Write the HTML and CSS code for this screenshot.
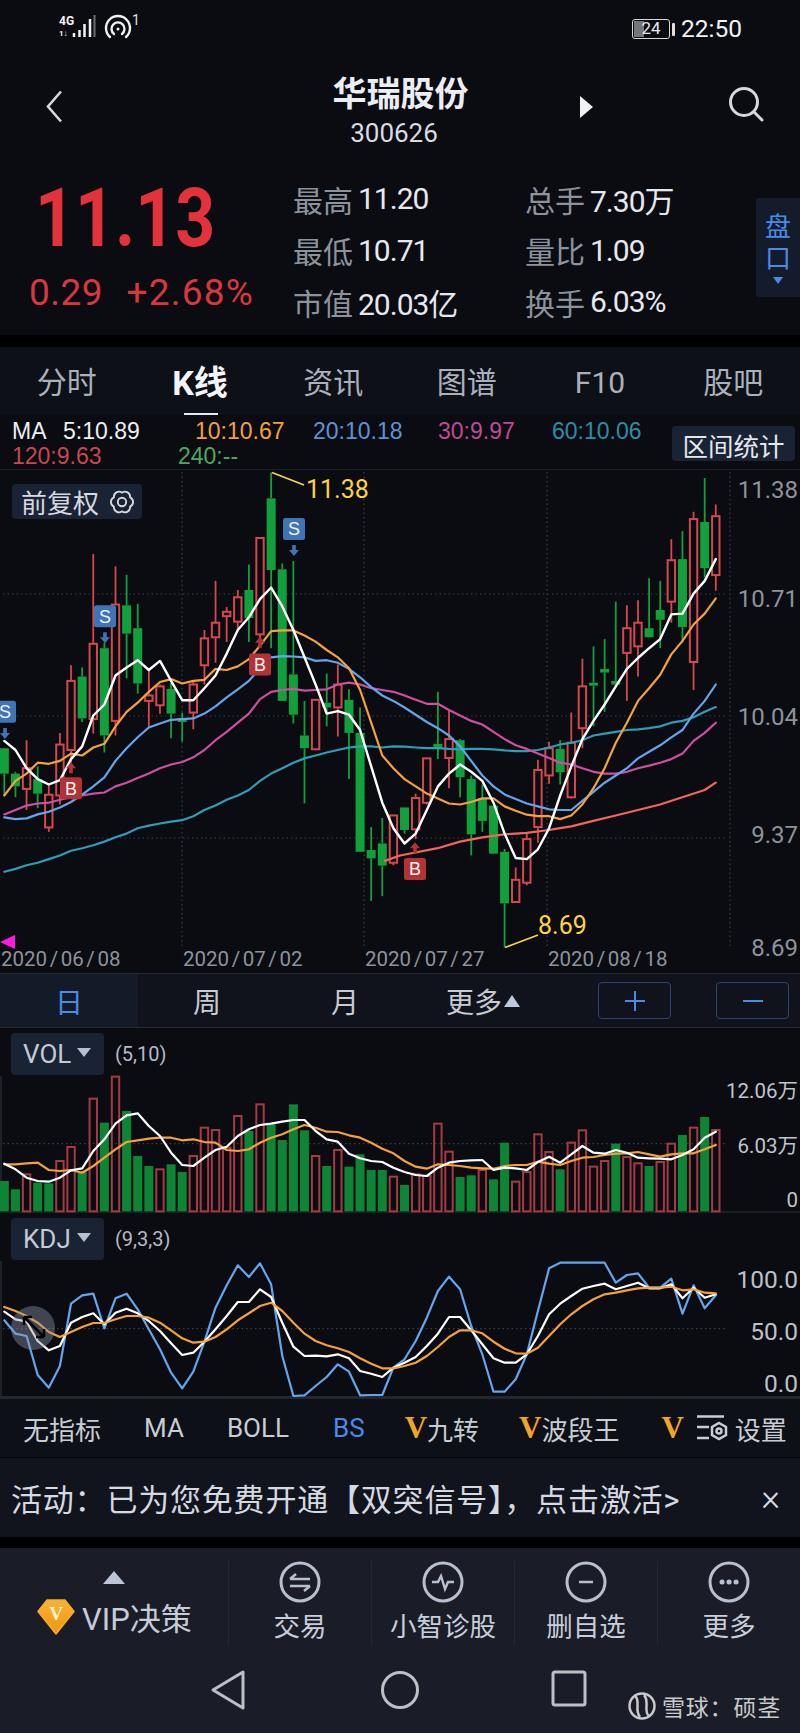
FILE: index.html
```html
<!DOCTYPE html>
<html lang="zh-CN">
<head>
    <meta charset="UTF-8">
    <meta name="viewport" content="width=device-width, initial-scale=1.0">
    <title>华瑞股份 300626</title>
    <link rel="stylesheet" href="styles.css">
</head>
<body>
    <!-- Header -->
    <header class="header">
        <div class="status-bar">
            <svg class="status-net" viewBox="0 0 100 30" width="100" height="30">
                <text class="net-text" x="2" y="10">4G</text>
                <text class="net-small" x="2" y="21">1↓</text>
                <path class="net-bars" d="M17 22v-4M22.500 22v-7M27.500 22v-13M33 22v-18"/>
                <path class="net-empty" d="M37.500 22v-22"/>
                <path class="net-arc" d="M53 22a12 12 0 1 1 16 0M57 19a6.500 6.500 0 1 1 8 0"/>
                <circle class="net-dot" cx="61" cy="14" r="1.500"/>
                <text class="net-one" x="75" y="10">1</text>
            </svg>
            <div class="status-right">
                <div class="battery"><span class="battery-fill"></span><span class="battery-num">24</span></div>
                <span class="battery-nub"></span>
                <span class="clock">22:50</span>
            </div>
        </div>

        <div class="title-bar">
            <svg class="back-icon" viewBox="0 0 17 33" width="17" height="33"><path d="M15 1.500L2 16.500L15 31.500"/></svg>
            <div class="stock-name">
                <h1>华瑞股份</h1>
                <p>300626</p>
            </div>
            <div class="title-actions">
                <span class="next-icon"></span>
                <svg class="search-icon" viewBox="0 0 36 36" width="36" height="36"><circle cx="16" cy="15" r="13.500"/><path d="M26 25l8 8"/></svg>
            </div>
        </div>

        <div class="quote">
            <div class="price-box">
                <div class="price">11.13</div>
                <div class="change"><span>0.29</span><span class="change-pct">+2.68%</span></div>
            </div>
            <div class="stats">
                <div class="stat"><span class="stat-label">最高</span><span class="stat-value">11.20</span></div>
                <div class="stat"><span class="stat-label">总手</span><span class="stat-value">7.30万</span></div>
                <div class="stat"><span class="stat-label">最低</span><span class="stat-value">10.71</span></div>
                <div class="stat"><span class="stat-label">量比</span><span class="stat-value">1.09</span></div>
                <div class="stat"><span class="stat-label">市值</span><span class="stat-value">20.03亿</span></div>
                <div class="stat"><span class="stat-label">换手</span><span class="stat-value">6.03%</span></div>
            </div>
            <div class="side-tab">
                <span>盘</span>
                <span>口</span>
                <i class="side-arrow"></i>
            </div>
        </div>
    </header>

    <!-- Tabs -->
    <nav class="tabs">
        <a>分时</a>
        <a class="tab-active">K线</a>
        <a>资讯</a>
        <a>图谱</a>
        <a>F10</a>
        <a>股吧</a>
    </nav>

    <!-- MA legend -->
    <div class="legend">
        <div class="legend-row legend-top">
            <span class="ma-white">MA</span>
            <span class="ma-white">5:10.89</span>
            <span class="ma-orange">10:10.67</span>
            <span class="ma-blue">20:10.18</span>
            <span class="ma-pink">30:9.97</span>
            <span class="ma-teal">60:10.06</span>
        </div>
        <div class="legend-row legend-bottom">
            <span class="ma-red">120:9.63</span>
            <span class="ma-green">240:--</span>
        </div>
        <button class="range-btn">区间统计</button>
    </div>

    <!-- K line chart -->
    <section class="pane pane-kline">
        <svg id="klineChart" class="pane-chart" viewBox="0 0 800 503"></svg>
        <div class="adjust-pill">
            <span>前复权</span>
            <svg class="gear-icon" viewBox="-15 -15 30 30" width="28" height="28">
                <path d="M8.660 5A5.500 5.500 0 0 1 0 10A5.500 5.500 0 0 1 -8.660 5A5.500 5.500 0 0 1 -8.660 -5A5.500 5.500 0 0 1 0 -10A5.500 5.500 0 0 1 8.660 -5A5.500 5.500 0 0 1 8.660 5Z"/>
                <circle r="4.500"/>
            </svg>
        </div>
        <span class="note note-high">11.38</span>
        <span class="note note-low">8.69</span>
        <span class="axis axis-kline" style="top:6px">11.38</span>
        <span class="axis axis-kline" style="top:115px">10.71</span>
        <span class="axis axis-kline" style="top:233px">10.04</span>
        <span class="axis axis-kline" style="top:351px">9.37</span>
        <span class="axis axis-kline" style="top:464px">8.69</span>
        <span class="date" style="left:1px">2020 / 06 / 08</span>
        <span class="date" style="left:183px">2020 / 07 / 02</span>
        <span class="date" style="left:365px">2020 / 07 / 27</span>
        <span class="date" style="left:548px">2020 / 08 / 18</span>
        <span class="start-mark"></span>
    </section>

    <!-- Period bar -->
    <div class="periods">
        <a class="period period-active">日</a>
        <a class="period">周</a>
        <a class="period">月</a>
        <a class="period">更多<i class="more-arrow"></i></a>
        <button class="zoom-btn zoom-plus"><svg viewBox="0 0 20 20" width="20" height="20"><path d="M0 10H20M10 0V20"/></svg></button>
        <button class="zoom-btn zoom-minus"><svg viewBox="0 0 20 20" width="20" height="20"><path d="M0 10H20"/></svg></button>
    </div>

    <!-- Volume -->
    <section class="pane pane-vol">
        <svg id="volChart" class="pane-chart" viewBox="0 0 800 185"></svg>
        <div class="indicator-head">
            <div class="indicator-pill">VOL<i class="pill-arrow"></i></div>
            <span class="indicator-args">(5,10)</span>
        </div>
        <span class="axis axis-vol" style="top:49px">12.06万</span>
        <span class="axis axis-vol" style="top:104px">6.03万</span>
        <span class="axis axis-vol" style="top:158px">0</span>
    </section>

    <!-- KDJ -->
    <section class="pane pane-kdj">
        <svg id="kdjChart" class="pane-chart" viewBox="0 0 800 185"></svg>
        <div class="indicator-head">
            <div class="indicator-pill">KDJ<i class="pill-arrow"></i></div>
            <span class="indicator-args">(9,3,3)</span>
        </div>
        <span class="axis axis-kdj" style="top:53px">100.0</span>
        <span class="axis axis-kdj" style="top:105px">50.0</span>
        <span class="axis axis-kdj" style="top:157px">0.0</span>
        <div class="cursor-ball">
            <svg viewBox="0 0 44 44" width="44" height="44"><path d="M13 11L33 31M13 11h8M13 11v8M33 31h-8M33 31v-8"/></svg>
        </div>
    </section>

    <!-- Indicator switch -->
    <div class="switcher">
        <a class="sw-first">无指标</a>
        <a class="sw-ma">MA</a>
        <a class="sw-boll">BOLL</a>
        <a class="sw-bs">BS</a>
        <a class="sw-nine"><b>V</b>九转</a>
        <a class="sw-wave"><b>V</b>波段王</a>
        <a class="sw-v"><b>V</b></a>
        <a class="sw-set">
            <svg class="set-icon" viewBox="0 0 32 27" width="32" height="27">
                <path d="M1 1.500H28M1 12H13M1 23H13"/>
                <path d="M23 8L30 12V20L23 24L16 20V12Z"/>
                <circle cx="23" cy="16" r="2.500"/>
            </svg>
            设置
        </a>
    </div>

    <!-- Activity banner -->
    <div class="banner">
        <span class="banner-text">活动&#xFF1A;已为您免费开通【双突信号】&#xFF0C;点击激活&gt;</span>
        <span class="banner-close">×</span>
    </div>

    <!-- Bottom toolbar -->
    <footer class="footer">
        <div class="toolbar">
            <div class="vip">
                <i class="vip-arrow"></i>
                <div class="vip-row">
                    <svg class="vip-gem" viewBox="0 0 38 36" width="38" height="36">
                        <defs>
                            <linearGradient id="gemFill" x1="0" y1="0" x2="0" y2="1">
                                <stop offset="0" stop-color="#f9b233"/>
                                <stop offset="1" stop-color="#ef9413"/>
                            </linearGradient>
                        </defs>
                        <path d="M10 1H28L37 12.500L19 35L1 12.500Z"/>
                        <text x="19" y="21">V</text>
                    </svg>
                    <span>VIP决策</span>
                </div>
            </div>
            <div class="tool">
                <svg viewBox="-21 -21 42 42" width="42" height="42"><circle r="19"/><path d="M-10 -3H10M-10 -3L-4 -8M-10 4H10M10 4L4 9"/></svg>
                <span>交易</span>
            </div>
            <div class="tool">
                <svg viewBox="-21 -21 42 42" width="42" height="42"><circle r="19"/><path d="M-11 0H-5L-2 -6L2 7L5 0H11"/></svg>
                <span>小智诊股</span>
            </div>
            <div class="tool">
                <svg viewBox="-21 -21 42 42" width="42" height="42"><circle r="19"/><path d="M-7 0H7"/></svg>
                <span>删自选</span>
            </div>
            <div class="tool">
                <svg viewBox="-21 -21 42 42" width="42" height="42"><circle r="19"/><path class="tool-dots" d="M-7 0h.1M0 0h.1M7 0h.1"/></svg>
                <span>更多</span>
            </div>
        </div>
        <div class="nav-keys">
            <svg viewBox="0 0 34 40" width="34" height="40"><path d="M2 20L32 2V38Z"/></svg>
            <svg viewBox="0 0 40 40" width="40" height="40"><circle cx="20" cy="20" r="17.500"/></svg>
            <svg class="nav-square" viewBox="0 0 36 38" width="36" height="38"><rect x="2" y="2" width="32" height="33" rx="2"/></svg>
        </div>
        <div class="watermark">
            <svg viewBox="0 0 30 30" width="30" height="30">
                <circle cx="15" cy="15" r="12.500"/>
                <path d="M8 5C14 9 7 20 13 26M22 25C16 21 23 10 17 4"/>
            </svg>
            <span>雪球&#xFF1A;硕茎</span>
        </div>
    </footer>

    <script src="chart.js"></script>
</body>
</html>
```

FILE: styles.css
```css
:root {
    --bg: #0a0c12;
    --panel: #0d1017;
    --pill: #1a2333;
    --bar: #1a1d27;
    --text: #e6e8ee;
    --muted: #8d939d;
    --soft: #b9bec9;
    --red: #e2333c;
    --blue: #4a8be8;
    --cjk: "Roboto", "Noto Sans CJK SC", sans-serif;
}

* {
    box-sizing: border-box;
}

body {
    margin: 0;
    width: 800px;
    height: 1733px;
    overflow: hidden;
    background-color: #000;
    color: var(--text);
    font-family: var(--cjk);
}

h1, p {
    margin: 0;
}

i {
    display: block;
}

/* Header */
.header {
    height: 335px;
    background-color: var(--bg);
}

.status-bar {
    height: 56px;
    padding: 15px 58px 0 57px;
    display: flex;
    justify-content: space-between;
    align-items: flex-start;
}

.status-net {
    overflow: visible;
}

.net-text {
    font: bold 12px "Roboto", sans-serif;
    fill: #f2f2f2;
}

.net-small {
    font: bold 8px "Roboto", sans-serif;
    fill: #f2f2f2;
}

.net-bars, .net-empty {
    fill: none;
    stroke: #f2f2f2;
    stroke-width: 2.500;
}

.net-empty {
    stroke: #6b6e74;
    stroke-width: 2;
}

.net-arc {
    fill: none;
    stroke: #f2f2f2;
    stroke-width: 2.400;
    stroke-linecap: round;
}

.net-dot {
    fill: #f2f2f2;
}

.net-one {
    font: 14px "Roboto", sans-serif;
    fill: #e0e0e0;
}

.status-right {
    display: flex;
    align-items: center;
    margin-top: 2px;
}

.battery {
    position: relative;
    width: 38px;
    height: 20px;
    border: 1.500px solid #d8d8d8;
    border-radius: 3px;
    text-align: center;
    font-size: 17px;
    line-height: 17px;
}

.battery-fill {
    position: absolute;
    left: 1px;
    top: 1px;
    bottom: 1px;
    width: 10px;
    background-color: #74767a;
}

.battery-num {
    position: relative;
}

.battery-nub {
    width: 3px;
    height: 13px;
    margin-left: 2px;
    background-color: #e0e0e0;
    border-radius: 1px;
}

.clock {
    margin-left: 6px;
    font-size: 24.500px;
    line-height: 24px;
    color: #f2f2f2;
}

.title-bar {
    height: 104px;
    padding: 0 46px;
    display: grid;
    grid-template-columns: 1fr 135px 1fr;
    align-items: start;
}

.back-icon {
    margin-top: 34px;
}

.back-icon path {
    fill: none;
    stroke: #d5d8e0;
    stroke-width: 2.600;
}

.stock-name {
    margin-top: 16px;
    text-align: center;
    white-space: nowrap;
}

.stock-name h1 {
    font-size: 34px;
    line-height: 44px;
    font-weight: bold;
    color: #eceef4;
}

.stock-name p {
    font-size: 26px;
    line-height: 28px;
    margin: 3px 12px 0 0;
    color: #d8dbe2;
}

.title-actions {
    display: flex;
    justify-content: space-between;
    padding-left: 112px;
    margin: 31px -10px 0 0;
}

.next-icon {
    width: 0;
    height: 0;
    margin-top: 9px;
    border-left: 13px solid #f0f1f5;
    border-top: 11px solid transparent;
    border-bottom: 11px solid transparent;
}

.search-icon path, .search-icon circle {
    fill: none;
    stroke: #d5d8e0;
    stroke-width: 3;
    stroke-linecap: round;
}

.quote {
    height: 175px;
    display: flex;
    align-items: flex-start;
}

.price-box {
    width: 293px;
    padding: 13px 0 0 29px;
    color: var(--red);
}

/* the app's digit font is narrower than Roboto */
.price {
    margin-left: 6px;
    font-size: 82px;
    line-height: 90px;
    font-weight: 700;
    transform: scaleX(0.85);
    transform-origin: left center;
}

.change {
    margin-top: 8px;
    width: 225px;
    display: flex;
    justify-content: space-between;
    font-size: 37px;
    line-height: 44px;
    letter-spacing: 0.500px;
    color: #d9363e;
}

.change-pct {
    letter-spacing: 1.200px;
}

.stats {
    width: 463px;
    margin-top: 13px;
    display: grid;
    grid-template-columns: 232px 231px;
    grid-auto-rows: 51.500px;
}

.stat {
    display: flex;
    align-items: center;
    white-space: nowrap;
}

.stat-label {
    font-size: 30px;
    width: 65px;
    color: var(--muted);
}

.stat-value {
    font-size: 30px;
    letter-spacing: -1px;
    color: var(--text);
}

.side-tab {
    width: 44px;
    height: 99px;
    margin-top: 38px;
    padding-top: 13px;
    background-color: #141c2c;
    color: var(--blue);
    font-size: 26px;
    line-height: 32px;
    text-align: center;
    display: flex;
    flex-direction: column;
    align-items: center;
    border-radius: 3px 0 0 3px;
}

.side-arrow {
    margin-top: 2px;
    border-top: 7px solid var(--blue);
    border-left: 5px solid transparent;
    border-right: 5px solid transparent;
}

/* Tabs */
.tabs {
    height: 68px;
    margin-top: 12px;
    background-color: var(--panel);
    display: grid;
    grid-template-columns: repeat(6, 1fr);
    text-align: center;
    font-size: 30px;
    line-height: 72px;
    color: #aab1bd;
}

.tabs a {
    position: relative;
}

.tab-active {
    color: #f2f4fa;
    font-size: 34px;
    font-weight: bold;
}

.tab-active::after {
    content: "";
    position: absolute;
    left: 51px;
    bottom: 0;
    width: 34px;
    height: 6px;
    background-color: #e6e8f5;
}

/* Legend */
.legend {
    position: relative;
    height: 55px;
    padding: 4px 0 0 12px;
    background-color: var(--bg);
    border-bottom: 1px solid #1b1e26;
    font-family: "Liberation Sans", sans-serif;
    font-size: 23px;
    line-height: 25px;
}

.legend-row {
    display: grid;
    white-space: nowrap;
}

.legend-top {
    grid-template-columns: 51px 132px 118px 125px 114px auto;
}

.legend-bottom {
    grid-template-columns: 166px auto;
}

.ma-white { color: #eceef0; }
.ma-orange { color: #f2a03d; }
.ma-blue { color: #5b94d6; }
.ma-pink { color: #bf4a94; }
.ma-teal { color: #2e8ca8; }
.ma-red { color: #c9474d; }
.ma-green { color: #4aa862; }

.range-btn {
    position: absolute;
    right: 5px;
    top: 11px;
    width: 123px;
    height: 35px;
    padding: 0;
    border: none;
    border-radius: 4px;
    background-color: var(--pill);
    color: #e6e8ee;
    font-family: var(--cjk);
    font-size: 25.500px;
    white-space: nowrap;
}

/* Chart panes */
.pane {
    position: relative;
    background-color: var(--bg);
}

.pane-chart {
    display: block;
    width: 800px;
    height: 100%;
}

.pane-kline {
    height: 503px;
}

.pane-vol, .pane-kdj {
    height: 185px;
}

.adjust-pill {
    position: absolute;
    left: 12px;
    top: 14px;
    width: 130px;
    height: 35px;
    padding-left: 9px;
    display: flex;
    align-items: center;
    gap: 9px;
    background-color: var(--pill);
    border-radius: 4px;
    font-size: 26px;
    white-space: nowrap;
    color: #d5d9e2;
}

.gear-icon path, .gear-icon circle {
    fill: none;
    stroke: #d5d9e2;
    stroke-width: 2;
    stroke-linejoin: round;
}

.note {
    position: absolute;
    font-size: 25px;
    line-height: 28px;
    color: #ffd23f;
}

.note-high {
    left: 306px;
    top: 6px;
}

.note-low {
    left: 538px;
    top: 442px;
}

.axis {
    position: absolute;
    right: 2px;
    line-height: 28px;
    white-space: nowrap;
}

.axis-kline {
    font-size: 24px;
    color: var(--muted);
}

.axis-vol {
    font-size: 20.500px;
    color: #c0c4cc;
}

.axis-kdj {
    font-size: 24.500px;
    color: #bcc0c9;
}

.date {
    position: absolute;
    top: 476px;
    font-size: 20.500px;
    line-height: 26px;
    word-spacing: -2.500px;
    color: var(--muted);
}

.start-mark {
    position: absolute;
    left: 0;
    top: 465px;
    border-right: 15px solid #ff19e8;
    border-top: 7px solid transparent;
    border-bottom: 7px solid transparent;
}

/* Period bar */
.periods {
    height: 55px;
    padding-right: 11px;
    display: flex;
    align-items: center;
    background-color: #10131b;
    border-top: 1px solid #262a34;
    border-bottom: 1px solid #262a34;
    font-size: 28px;
    color: #c7cbd3;
}

.period {
    width: 138px;
    height: 100%;
    display: flex;
    justify-content: center;
    align-items: center;
}

.period-active {
    background-color: #131a28;
    color: var(--blue);
}

.more-arrow {
    margin-left: 2px;
    border-bottom: 12px solid #bec8de;
    border-left: 8px solid transparent;
    border-right: 8px solid transparent;
}

.zoom-btn {
    width: 73px;
    height: 37px;
    padding: 0;
    display: flex;
    justify-content: center;
    align-items: center;
    background-color: transparent;
    border: 1.500px solid #2d4470;
    border-radius: 4px;
}

.zoom-btn path {
    fill: none;
    stroke: var(--blue);
    stroke-width: 2;
}

.zoom-plus {
    margin-left: 46px;
}

.zoom-minus {
    margin-left: 45px;
}

.indicator-head {
    position: absolute;
    left: 11px;
    top: 5px;
    display: flex;
    align-items: center;
    gap: 11px;
}

.indicator-pill {
    width: 93px;
    height: 42px;
    padding-left: 12px;
    display: flex;
    align-items: center;
    gap: 6px;
    background-color: var(--pill);
    border-radius: 4px;
    font-size: 26px;
    color: #c4cad6;
}

.pill-arrow {
    margin-top: -4px;
    border-top: 9px solid #b8bfce;
    border-left: 7px solid transparent;
    border-right: 7px solid transparent;
}

.indicator-args {
    font-size: 20px;
    color: #b5bac5;
}

.cursor-ball {
    position: absolute;
    left: 11px;
    top: 93px;
    width: 44px;
    height: 44px;
    border-radius: 50%;
    background-color: rgba(140, 150, 170, 0.42);
}

.cursor-ball svg {
    display: block;
}

.cursor-ball path {
    fill: none;
    stroke: #000;
    stroke-width: 2.500;
}

/* Indicator switch */
.switcher {
    position: relative;
    height: 60px;
    background-color: var(--panel);
    border-top: 1px solid #23262e;
    border-bottom: 1px solid #05060a;
    display: flex;
    align-items: center;
    font-size: 26px;
    color: #c8ccd4;
    white-space: nowrap;
}

.switcher a {
    display: flex;
    align-items: center;
}

.switcher b {
    font-family: "Liberation Serif", serif;
    font-size: 31px;
    color: #f3a522;
}

.sw-first { margin-left: 23px; }
.sw-ma { margin-left: 43px; }
.sw-boll { margin-left: 43px; }
.sw-bs { margin-left: 44px; color: var(--blue); }
.sw-nine { margin-left: 40px; }
.sw-wave { margin-left: 40px; }
.sw-v { margin-left: 42px; }
.sw-set { margin-left: 12px; }

.set-icon {
    margin-right: 7px;
}

.set-icon path, .set-icon circle {
    fill: none;
    stroke: #c8ccd4;
    stroke-width: 2.500;
}

/* Activity banner */
.banner {
    height: 79px;
    padding: 0 20px 0 11px;
    display: flex;
    justify-content: space-between;
    align-items: center;
    background-color: #11141c;
    font-size: 31px;
    color: #d5d9e2;
    white-space: nowrap;
}

.banner-text {
    letter-spacing: 0.800px;
}

.banner-close {
    font-size: 36px;
    font-weight: 300;
}

/* Bottom toolbar */
.footer {
    position: relative;
    height: 186px;
    margin-top: 11px;
    background-color: var(--bar);
}

.toolbar {
    height: 108px;
    display: grid;
    grid-template-columns: 228px repeat(4, 143px);
    padding-top: 13px;
}

.vip {
    padding-left: 37px;
}

.vip-arrow {
    width: 0;
    margin: 10px 0 0 66px;
    border-bottom: 13px solid #bcc4d6;
    border-left: 11px solid transparent;
    border-right: 11px solid transparent;
}

.vip-row {
    margin-top: 10px;
    display: flex;
    align-items: center;
    gap: 7px;
    font-size: 31px;
    color: #c5cbd9;
    white-space: nowrap;
}

.vip-gem path {
    fill: url(#gemFill);
    stroke: #f7ab2c;
    stroke-width: 1.500;
    stroke-linejoin: round;
}

.vip-gem text {
    font: bold 19px "Liberation Serif", serif;
    text-anchor: middle;
    fill: #fff3cf;
}

.tool {
    height: 84px;
    display: flex;
    flex-direction: column;
    align-items: center;
    border-left: 1px solid #242833;
    font-size: 26.500px;
    line-height: 36px;
    color: #c8cedb;
    white-space: nowrap;
}

.tool svg {
    display: block;
    margin-bottom: 6px;
}

.tool circle, .tool path {
    fill: none;
    stroke: #b8bfce;
    stroke-width: 3;
}

.tool path {
    stroke-width: 2.500;
}

.tool .tool-dots {
    stroke-width: 5;
    stroke-linecap: round;
}

.nav-keys {
    padding: 14px 0 0 211px;
    display: flex;
    align-items: flex-start;
    gap: 135px;
}

.nav-keys svg {
    overflow: visible;
}

.nav-square {
    margin-left: -4px;
}

.nav-keys path, .nav-keys circle, .nav-keys rect {
    fill: none;
    stroke: #bdbfc4;
    stroke-width: 3;
    stroke-linejoin: round;
}

.watermark {
    position: absolute;
    left: 627px;
    bottom: 11px;
    display: flex;
    align-items: center;
    gap: 5px;
    font-size: 23px;
    letter-spacing: 0.800px;
    color: #c9cacc;
    white-space: nowrap;
}

.watermark circle, .watermark path {
    fill: none;
    stroke: #c9cacc;
    stroke-width: 2.500;
}
```

FILE: chart.js
```js
// All chart numbers below were read off enlarged crops of the chart.
// x runs 3 units per pixel; the k line y runs 2.75 units per pixel, vol and kdj y 3 per pixel.
const SVG_NS = 'http://www.w3.org/2000/svg';
const STEP = 33.35;
const barX = i => (13 + STEP * i) / 3;

function add(svg, tag, attrs, text) {
    const el = document.createElementNS(SVG_NS, tag);
    Object.keys(attrs).forEach(k => el.setAttribute(k, attrs[k]));
    if (text) el.textContent = text;
    svg.appendChild(el);
    return el;
}

function line(svg, pts, color, toY, width) {
    const points = pts.map(p => (p[0] / 3).toFixed(1) + ',' + toY(p[1]).toFixed(1)).join(' ');
    add(svg, 'polyline', {
        points: points, fill: 'none', stroke: color,
        'stroke-width': width || 2.2, 'stroke-linejoin': 'round', 'stroke-linecap': 'round'
    });
}

function seq(values) {
    return values.map((v, i) => [13 + STEP * i, v]);
}

/* ---------- k line ---------- */
const GREEN = '#12a03c';
const RED = '#d6474e';
const ky = y => y / 2.75 - 60;

// type, high, body top, body bottom, low
const candles = [
    ['g', 930, 930, 1000, 1060], ['g', 995, 1000, 1035, 1065], ['r', 908, 985, 1042, 1100], ['g', 980, 1015, 1055, 1095],
    ['r', 1030, 1058, 1148, 1160], ['r', 888, 920, 1060, 1085], ['r', 702, 745, 935, 970], ['g', 708, 733, 848, 858],
    ['r', 396, 643, 850, 890], ['g', 640, 655, 895, 942], ['r', 430, 535, 855, 895], ['g', 453, 537, 615, 738],
    ['g', 533, 600, 752, 780], ['r', 715, 785, 800, 870], ['r', 755, 760, 812, 835], ['g', 750, 767, 835, 903],
    ['g', 832, 847, 858, 912], ['r', 745, 755, 832, 878], ['r', 605, 628, 702, 755], ['r', 470, 585, 625, 695],
    ['r', 542, 555, 567, 638], ['r', 495, 515, 582, 605], ['g', 425, 495, 572, 638], ['r', 352, 352, 617, 630],
    ['g', 172, 243, 440, 655], ['g', 422, 438, 800, 800], ['g', 415, 727, 838, 862], ['g', 800, 895, 930, 1082],
    ['r', 797, 797, 933, 933], ['g', 725, 805, 818, 870], ['r', 700, 755, 818, 898], ['g', 768, 797, 888, 1015],
    ['g', 818, 888, 1215, 1215], ['g', 1147, 1210, 1233, 1350], ['g', 1122, 1192, 1253, 1337], ['r', 1115, 1115, 1245, 1252],
    ['g', 1093, 1093, 1155, 1165], ['r', 1055, 1067, 1153, 1180], ['r', 958, 958, 1080, 1085], ['g', 775, 918, 930, 960],
    ['r', 825, 905, 957, 1040], ['g', 905, 908, 1010, 1065], ['g', 1005, 1015, 1167, 1225], ['g', 1030, 1068, 1130, 1160],
    ['g', 1088, 1088, 1220, 1220], ['g', 1207, 1215, 1357, 1478], ['r', 1258, 1292, 1353, 1353], ['r', 1165, 1180, 1300, 1307],
    ['r', 962, 990, 1147, 1190], ['r', 912, 930, 1005, 1028], ['g', 908, 932, 996, 1030], ['r', 832, 915, 1065, 1068],
    ['r', 684, 760, 875, 930], ['g', 650, 750, 758, 870], ['g', 630, 712, 722, 830], ['g', 527, 745, 755, 760],
    ['r', 537, 600, 668, 800], ['r', 523, 585, 650, 733], ['g', 463, 600, 625, 625], ['g', 470, 550, 577, 655],
    ['r', 355, 413, 527, 585], ['g', 333, 410, 597, 640], ['r', 280, 300, 693, 770], ['g', 187, 308, 435, 460],
    ['r', 260, 292, 454, 497]
];

const ma5 = seq([910, 935, 985, 1015, 1030, 1018, 960, 925, 840, 810, 730, 708, 688, 715, 690, 745, 798, 798, 765, 730, 670, 605, 570, 520, 488, 540, 605, 680, 755, 835, 828, 838, 880, 980, 1080, 1150, 1192, 1165, 1100, 1035, 1000, 975, 995, 1020, 1080, 1165, 1232, 1235, 1208, 1150, 1060, 980, 905, 855, 810, 760, 712, 682, 655, 630, 562, 560, 505, 470, 410]);
const ma10 = seq([1060, 1020, 1000, 970, 973, 965, 945, 950, 928, 918, 870, 830, 805, 775, 748, 740, 752, 745, 742, 712, 715, 705, 685, 648, 608, 606, 606, 620, 637, 660, 680, 710, 770, 860, 950, 985, 1015, 1035, 1055, 1068, 1082, 1085, 1078, 1068, 1068, 1090, 1102, 1113, 1117, 1117, 1125, 1115, 1085, 1040, 985, 915, 860, 800, 765, 728, 672, 635, 590, 560, 518]);
const ma20 = seq([1120, 1125, 1123, 1112, 1105, 1093, 1078, 1058, 1035, 1010, 965, 930, 900, 873, 862, 852, 850, 848, 835, 815, 790, 768, 745, 710, 680, 677, 678, 680, 690, 688, 695, 712, 735, 762, 785, 800, 818, 838, 858, 875, 895, 925, 965, 1005, 1035, 1057, 1070, 1082, 1090, 1098, 1100, 1100, 1075, 1050, 1025, 1005, 985, 958, 940, 922, 900, 880, 835, 800, 755]);
const ma30 = seq([1112, 1100, 1088, 1082, 1080, 1072, 1065, 1060, 1055, 1052, 1035, 1025, 1012, 1000, 985, 975, 968, 955, 935, 908, 885, 860, 835, 795, 775, 770, 767, 772, 770, 768, 755, 750, 755, 765, 770, 775, 785, 797, 808, 808, 825, 840, 855, 865, 885, 905, 922, 932, 945, 957, 970, 975, 985, 995, 1000, 1000, 995, 985, 978, 970, 960, 945, 910, 888, 860]);
const ma60 = seq([1270, 1262, 1252, 1245, 1235, 1225, 1212, 1205, 1197, 1187, 1175, 1165, 1150, 1143, 1137, 1132, 1128, 1117, 1100, 1088, 1072, 1060, 1045, 1020, 1000, 985, 970, 958, 950, 942, 935, 928, 925, 925, 928, 925, 926, 928, 930, 930, 932, 933, 932, 932, 933, 936, 938, 938, 935, 928, 920, 915, 908, 895, 890, 885, 880, 878, 875, 870, 860, 855, 845, 830, 817]);
const ma120 = [[1155, 1240], [1200, 1225], [1313, 1205], [1380, 1187], [1447, 1175], [1513, 1167], [1580, 1163], [1647, 1155], [1680, 1150], [1714, 1145], [1780, 1130], [1847, 1115], [1914, 1100], [1980, 1085], [2047, 1065], [2114, 1045], [2147, 1025]];

function drawGrid(svg, rows, cols, top, bottom) {
    const dot = { stroke: '#3a3e46', 'stroke-width': 1.2, 'stroke-dasharray': '1.500 3' };
    rows.forEach(y => add(svg, 'line', Object.assign({ x1: 3, x2: 727, y1: y, y2: y }, dot)));
    cols.forEach(x => add(svg, 'line', Object.assign({ x1: x, x2: x, y1: top, y2: bottom }, dot)));
}

function drawKline(svg) {
    drawGrid(svg, [124, 246, 368], [182, 364, 547, 730], 2, 478);

    candles.forEach((c, i) => {
        const x = barX(i);
        const color = c[0] === 'g' ? GREEN : RED;
        const wick = { x1: x, x2: x, stroke: color, 'stroke-width': 1.8 };
        add(svg, 'line', Object.assign({ y1: ky(c[1]), y2: ky(c[2]) }, wick));
        add(svg, 'line', Object.assign({ y1: ky(c[3]), y2: ky(c[4]) }, wick));
        if (c[0] === 'g') {
            add(svg, 'rect', { x: x - 4.5, y: ky(c[2]), width: 9, height: ky(c[3]) - ky(c[2]), fill: GREEN });
        } else {
            add(svg, 'rect', { x: x - 3.7, y: ky(c[2]), width: 7.4, height: ky(c[3]) - ky(c[2]), fill: '#0a0c12', stroke: RED, 'stroke-width': 2 });
        }
    });

    line(svg, ma60, '#2f9cb8', ky);
    line(svg, ma120, '#f4655c', ky);
    line(svg, ma30, '#cf4ea0', ky);
    line(svg, ma20, '#62a6ee', ky);
    line(svg, ma10, '#f5a13c', ky);
    line(svg, ma5, '#ffffff', ky, 2.4);

    // high / low callouts
    add(svg, 'path', { d: 'M272 2.500L304 15', stroke: '#ffd23f', 'stroke-width': 1.8, fill: 'none' });
    add(svg, 'path', { d: 'M505 477.500L538 465', stroke: '#ffd23f', 'stroke-width': 1.8, fill: 'none' });

    // sell and buy signals: x, box y, arrow y
    [[5, 830, 888], [105, 567, 625], [294, 327, 385]].forEach(s => marker(svg, 'S', s[0], s[1], s[2], '#3f75b5'));
    [[71, 1040, 985], [260, 700, 640], [415, 1262, 1205]].forEach(s => marker(svg, 'B', s[0], s[1], s[2], '#b23235'));
}

function marker(svg, label, x, boxY, arrowY, color) {
    const y = ky(boxY);
    const a = ky(arrowY);
    add(svg, 'rect', { x: x - 11, y: y - 11, width: 22, height: 22, rx: 2.5, fill: color });
    add(svg, 'text', {
        x: x, y: y + 6.5, fill: '#f2f2f2', 'text-anchor': 'middle',
        'font-family': 'Liberation Sans, sans-serif', 'font-size': 18
    }, label);
    const dir = label === 'S' ? 1 : -1;
    add(svg, 'path', {
        d: `M${x - 1.8} ${a - 5 * dir}h3.6v${5 * dir}h3.2L${x} ${a + 6 * dir}L${x - 5} ${a}h3.2z`,
        fill: color
    });
}

/* ---------- volume ---------- */
const vy = y => y / 3 - 57;
const volTops = [630, 655, 610, 635, 637, 570, 528, 600, 383, 455, 317, 420, 555, 585, 595, 580, 603, 555, 470, 477, 530, 435, 480, 400, 460, 507, 400, 478, 555, 585, 537, 587, 550, 597, 597, 617, 642, 610, 615, 458, 542, 618, 613, 597, 625, 515, 632, 603, 490, 543, 595, 515, 478, 587, 570, 518, 558, 577, 585, 573, 518, 492, 470, 438, 477];
const volKinds = 'ggrggrrgrg' + 'rgggrggrrr' + 'rrgrggggrg' + 'rggggrgrrr' + 'rggrggrrrr' + 'grrrrgrrgr' + 'rgrgr';
const volWhite = seq([578, 595, 620, 630, 632, 620, 598, 592, 540, 505, 458, 433, 427, 465, 495, 545, 582, 585, 560, 537, 527, 495, 475, 462, 458, 452, 447, 447, 480, 505, 512, 548, 562, 570, 573, 590, 603, 612, 615, 590, 575, 570, 568, 567, 597, 590, 592, 597, 573, 557, 575, 550, 525, 545, 548, 537, 545, 560, 562, 563, 565, 552, 535, 500, 482]);
const volOrange = seq([580, 580, 577, 575, 597, 600, 597, 605, 585, 560, 535, 513, 508, 503, 500, 500, 508, 505, 513, 515, 537, 540, 535, 515, 500, 490, 475, 462, 470, 482, 483, 493, 500, 515, 533, 547, 570, 587, 593, 580, 582, 585, 590, 592, 593, 585, 582, 582, 572, 578, 582, 570, 560, 558, 552, 548, 547, 543, 550, 557, 550, 547, 547, 535, 522]);

function drawVol(svg) {
    add(svg, 'line', { x1: 0, x2: 800, y1: 184, y2: 184, stroke: '#2c3038', 'stroke-width': 1 });
    add(svg, 'line', { x1: 1, x2: 1, y1: 48, y2: 184, stroke: '#23272f', 'stroke-width': 1.5 });
    add(svg, 'line', { x1: 3, x2: 727, y1: vy(518), y2: vy(518), stroke: '#3a3e46', 'stroke-width': 1.2, 'stroke-dasharray': '1.500 3' });

    volTops.forEach((top, i) => {
        const x = barX(i);
        const y = vy(top);
        const bottom = vy(721);
        if (volKinds[i] === 'r') {
            add(svg, 'rect', { x: x - 3.7, y: y, width: 7.4, height: bottom - y, fill: 'none', stroke: '#a63a42', 'stroke-width': 2 });
        } else {
            add(svg, 'rect', { x: x - 4.5, y: y, width: 9, height: bottom - y, fill: '#0d8535' });
        }
    });

    line(svg, volOrange, '#f5a13c', vy);
    line(svg, volWhite, '#ffffff', vy);
}

/* ---------- kdj ---------- */
const dy = y => y / 3 + 38;
const kdjWhite = seq([182, 205, 212, 270, 298, 285, 215, 198, 187, 220, 185, 173, 187, 210, 240, 277, 312, 305, 272, 235, 195, 153, 153, 115, 138, 215, 287, 315, 314, 316, 310, 322, 360, 368, 378, 350, 335, 318, 285, 248, 198, 198, 238, 280, 322, 335, 335, 310, 255, 190, 158, 135, 113, 105, 98, 115, 105, 95, 112, 112, 100, 142, 110, 140, 130]);
const kdjOrange = seq([168, 180, 195, 215, 243, 258, 243, 228, 216, 216, 205, 195, 195, 200, 215, 238, 262, 275, 272, 258, 235, 208, 187, 165, 155, 180, 215, 248, 270, 283, 292, 303, 322, 338, 352, 352, 345, 335, 315, 288, 258, 238, 238, 247, 272, 293, 307, 308, 290, 255, 220, 190, 165, 145, 130, 125, 118, 112, 110, 110, 107, 118, 115, 125, 127]);
const kdjBlue = seq([208, 248, 255, 372, 410, 345, 158, 133, 128, 232, 142, 128, 175, 235, 295, 365, 412, 362, 272, 170, 103, 43, 78, 37, 100, 315, 435, 433, 405, 378, 340, 362, 433, 432, 432, 350, 325, 270, 200, 120, 77, 115, 225, 310, 422, 422, 385, 310, 180, 52, 35, 35, 35, 35, 35, 95, 72, 67, 110, 110, 83, 188, 103, 172, 133]);

function drawKdj(svg) {
    add(svg, 'line', { x1: 0, x2: 800, y1: 184, y2: 184, stroke: '#2c3038', 'stroke-width': 1.5 });
    add(svg, 'line', { x1: 1, x2: 1, y1: 48, y2: 184, stroke: '#23272f', 'stroke-width': 1.5 });
    add(svg, 'line', { x1: 3, x2: 727, y1: dy(233), y2: dy(233), stroke: '#3a3e46', 'stroke-width': 1.2, 'stroke-dasharray': '1.500 3' });

    line(svg, kdjBlue, '#62a6ee', dy);
    line(svg, kdjWhite, '#ffffff', dy);
    line(svg, kdjOrange, '#f5a13c', dy);
}

drawKline(document.getElementById('klineChart'));
drawVol(document.getElementById('volChart'));
drawKdj(document.getElementById('kdjChart'));
```
